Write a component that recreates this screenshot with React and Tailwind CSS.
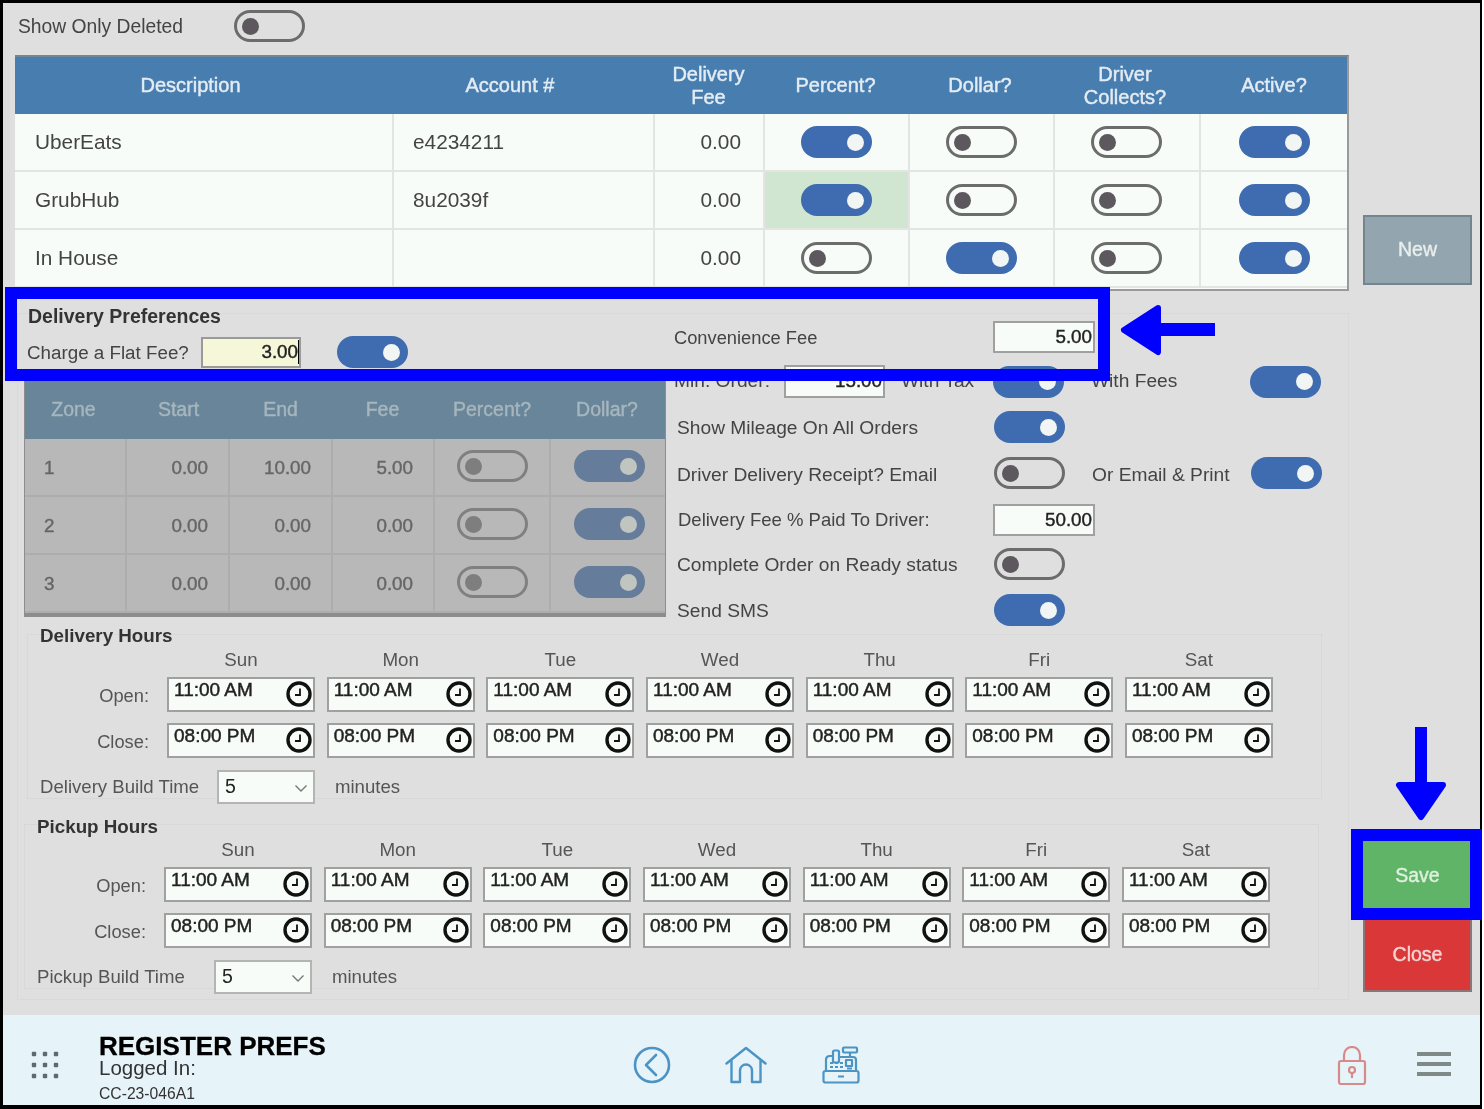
import React from "react";

const Toggle = ({ on, dim, className = "" }) => {
  if (on) {
    return (
      <div className={`w-[71px] h-[32px] shrink-0 rounded-full flex items-center justify-end pr-[8px] ${dim ? "bg-[#667c9b]" : "bg-[#3f6cb0]"} ${className}`}>
        <div className={`w-[17px] h-[17px] rounded-full ${dim ? "bg-[#c0c5c0]" : "bg-[#f1f5f3]"}`} />
      </div>
    );
  }
  return (
    <div className={`w-[71px] h-[32px] shrink-0 rounded-full border-[3px] flex items-center pl-[5px] ${dim ? "border-[#808080]" : "border-[#6c6c6c]"} ${className}`}>
      <div className={`w-[17px] h-[17px] rounded-full ${dim ? "bg-[#7e7e7e]" : "bg-[#5d585e]"}`} />
    </div>
  );
};

const Clock = () => (
  <svg width="26" height="26" viewBox="0 0 26 26" fill="none" className="ml-auto mt-[2px] shrink-0">
    <circle cx="13" cy="13" r="11" stroke="#111" strokeWidth="3.4" />
    <path d="M14 7.500V14H9" stroke="#111" strokeWidth="1.8" />
  </svg>
);

const TimeBox = ({ t }) => (
  <div className="w-[148px] h-[35px] shrink-0 border-2 border-[#a0a0a0] bg-[#f8fcf8] flex items-start pl-[5px] pr-px text-[19px] leading-[22px] text-[#222] [-webkit-text-stroke:0.45px_#222]">
    <span>{t}</span>
    <Clock />
  </div>
);

const DAYS = ["Sun", "Mon", "Tue", "Wed", "Thu", "Fri", "Sat"];

const HoursBox = ({ title, build, className, titleTop }) => (
  <div className={`w-[1295px] h-[165px] border border-[#d8d8d8] ${className}`}>
    <div className={`h-6 ${titleTop} pl-[12px] leading-6 font-bold text-[18.8px] text-[#333]`}>{title}</div>
    <div className="h-6 flex">
      <div className="w-[139px] shrink-0" />
      <div className="flex gap-[11.67px]">
        {DAYS.map((d) => (
          <div key={d} className="w-[148px] text-center leading-6 text-[18.8px] text-[#555]">{d}</div>
        ))}
      </div>
    </div>
    <div className="flex mt-[5px] items-center">
      <div className="w-[121px] mr-[18px] text-right text-[18.3px] text-[#555] shrink-0 pt-[3px]">Open:</div>
      <div className="flex gap-[11.67px]">
        {DAYS.map((d) => <TimeBox key={d} t="11:00 AM" />)}
      </div>
    </div>
    <div className="flex mt-[11px] items-center">
      <div className="w-[121px] mr-[18px] text-right text-[18.3px] text-[#555] shrink-0 pt-[3px]">Close:</div>
      <div className="flex gap-[11.67px]">
        {DAYS.map((d) => <TimeBox key={d} t="08:00 PM" />)}
      </div>
    </div>
    <div className="flex items-center mt-[12px] pl-[12px]">
      <div className="w-[177px] shrink-0 text-[18.6px] text-[#555]">{build}</div>
      <div className="w-[98px] h-[34px] border-2 border-[#b4b4b4] bg-[#f8fcf8] flex items-center pl-[6px] pr-[5px] text-[19.5px] text-[#222] shrink-0">
        <span>5</span>
        <svg width="14" height="14" viewBox="0 0 14 14" fill="none" className="ml-auto mt-[2px]">
          <path d="M1.500 4.500 7 10l5.500-5.500" stroke="#777" strokeWidth="1.4" />
        </svg>
      </div>
      <div className="ml-[20px] text-[18.6px] text-[#555]">minutes</div>
    </div>
  </div>
);

const TOP_ROWS = [
  { d: "UberEats", a: "e4234211", p: true, dl: false, c: false, ac: true },
  { d: "GrubHub", a: "8u2039f", p: true, dl: false, c: false, ac: true, hi: true },
  { d: "In House", a: "", p: false, dl: true, c: false, ac: true },
];

const TOP_COLS = "grid-cols-[379px_261px_110px_145px_145px_146px_146px]";

const TopTable = () => (
  <div className="w-[1334px] h-[236px] border-t-2 border-t-[#6f8797] border-r-2 border-b-2 border-[#9a9a9a] bg-[#f8fcf8]">
    <div className={`grid ${TOP_COLS} h-[57px] bg-[#487db0] text-[#e3ecf3] text-[20px] leading-[23px] text-center [-webkit-text-stroke:0.45px_#e3ecf3]`}>
      <div className="flex items-center justify-center pr-[28px]">Description</div>
      <div className="flex items-center justify-center pr-[29px]">Account #</div>
      <div className="flex items-center justify-center pr-[3px]">Delivery<br />Fee</div>
      <div className="flex items-center justify-center pr-[4px]">Percent?</div>
      <div className="flex items-center justify-center pr-[5px]">Dollar?</div>
      <div className="flex items-center justify-center pr-[6px]">Driver<br />Collects?</div>
      <div className="flex items-center justify-center">Active?</div>
    </div>
    {TOP_ROWS.map((r) => (
      <div key={r.d} className={`grid ${TOP_COLS} h-[58px] border-b-2 border-[#e2e5e2] text-[20.8px] text-[#444]`}>
        <div className="flex items-center pl-[20px] border-r-2 border-[#e2e5e2]">{r.d}</div>
        <div className="flex items-center pl-[19px] border-r-2 border-[#e2e5e2]">{r.a}</div>
        <div className="flex items-center justify-end pr-[22px] border-r-2 border-[#e2e5e2]">0.00</div>
        <div className={`flex items-center justify-center border-r-2 border-[#e2e5e2] ${r.hi ? "bg-[#d1e6d1]" : ""}`}><Toggle on={r.p} /></div>
        <div className="flex items-center justify-center border-r-2 border-[#e2e5e2]"><Toggle on={r.dl} /></div>
        <div className="flex items-center justify-center pr-[2px] border-r-2 border-[#e2e5e2]"><Toggle on={r.c} /></div>
        <div className="flex items-center justify-center"><Toggle on={r.ac} /></div>
      </div>
    ))}
  </div>
);

const ZONE_COLS = "grid-cols-[102px_103px_103px_102px_116px_116px]";
const ZONES = [
  ["1", "0.00", "10.00", "5.00"],
  ["2", "0.00", "0.00", "0.00"],
  ["3", "0.00", "0.00", "0.00"],
];

const ZoneTable = () => (
  <div className="w-[642px] h-[236px] mt-[13px] border-b-4 border-[#8d8d8d] border-x border-x-[#8d8d8d] bg-[#b8b8b8]">
    <div className={`grid ${ZONE_COLS} h-[58px] bg-[#688599] text-[#a7b6be] text-[19.5px] text-center [-webkit-text-stroke:0.4px_#a7b6be]`}>
      <div className="flex items-center justify-center pr-[5px]">Zone</div>
      <div className="flex items-center justify-center">Start</div>
      <div className="flex items-center justify-center pr-[2px]">End</div>
      <div className="flex items-center justify-center pr-[3px]">Fee</div>
      <div className="flex items-center justify-center pr-[2px]">Percent?</div>
      <div className="flex items-center justify-center pr-[4px]">Dollar?</div>
    </div>
    {ZONES.map((z) => (
      <div key={z[0]} className={`grid ${ZONE_COLS} h-[58px] border-b-2 border-[#adadad] text-[18.8px] text-[#666] [-webkit-text-stroke:0.4px_#666]`}>
        <div className="flex items-center pl-[19px] pt-[2px] border-r-2 border-[#adadad]">{z[0]}</div>
        <div className="flex items-center justify-end pr-[20px] pt-[2px] border-r-2 border-[#adadad]">{z[1]}</div>
        <div className="flex items-center justify-end pr-[20px] pt-[2px] border-r-2 border-[#adadad]">{z[2]}</div>
        <div className="flex items-center justify-end pr-[20px] pt-[2px] border-r-2 border-[#adadad]">{z[3]}</div>
        <div className="flex items-center justify-center pb-[2px] border-r-2 border-[#adadad]"><Toggle dim /></div>
        <div className="flex items-center justify-center pb-[2px]"><Toggle dim on /></div>
      </div>
    ))}
  </div>
);

const NumBox = ({ v, className = "" }) => (
  <div className={`h-[32px] border-2 border-[#a0a0a0] bg-[#f8fcf8] flex items-center justify-end pr-px text-[18.8px] text-[#222] [-webkit-text-stroke:0.4px_#222] ${className}`}>
    {v}
  </div>
);

const PrefRow = ({ label, mt, children, labelClass = "pl-[3px] pt-[3px] text-[19.2px]", w = "w-[319px]" }) => (
  <div className={`flex items-center h-[32px] ${mt}`}>
    <div className={`${w} shrink-0 ${labelClass} text-[#444]`}>{label}</div>
    {children}
  </div>
);

const Prefs = () => (
  <div className="ml-[2px] w-[1332px] h-[687px] mt-[22px] border border-[#d9d9d9]">
    <div className="flex pl-[6px]">
      <div className="w-[642px] shrink-0">
        <div className="h-6 -mt-[10px] pl-[4px] leading-6 font-bold text-[19.5px] text-[#333]">Delivery Preferences</div>
        <div className="flex items-center h-[32px] mt-[8px]">
          <div className="w-[177px] pl-[3px] pt-[2px] text-[18.8px] text-[#444] shrink-0">Charge a Flat Fee?</div>
          <div className="w-[100px] h-[31px] border-2 border-[#9a9a9a] bg-[#f6f7d9] flex items-center justify-end text-[18.8px] text-[#222] [-webkit-text-stroke:0.4px_#222] shrink-0">
            3.00<span className="w-px h-[24px] bg-black" />
          </div>
          <Toggle on className="ml-[36px]" />
        </div>
        <ZoneTable />
      </div>
      <div className="ml-[8px] w-[660px]">
        <div className="flex items-center h-[32px] mt-[7px]">
          <div className="w-[319px] shrink-0 pt-[2px] text-[18.3px] text-[#444]">Convenience Fee</div>
          <NumBox v="5.00" className="w-[102px]" />
        </div>
        <div className="flex items-center h-[33px] mt-[12px] text-[19.2px] text-[#444]">
          <div className="w-[110px] shrink-0">Min. Order:</div>
          <NumBox v="15.00" className="w-[101px] h-[33px]" />
          <div className="w-[92px] ml-[16px] shrink-0">With Tax</div>
          <Toggle on />
          <div className="w-[159px] ml-[27px] shrink-0">With Fees</div>
          <Toggle on />
        </div>
        <PrefRow label="Show Mileage On All Orders" mt="mt-[13px]" w="w-[320px]" labelClass="pl-[3px] pt-[3px] text-[19.2px]"><Toggle on /></PrefRow>
        <PrefRow label="Driver Delivery Receipt? Email" mt="mt-[14px]" w="w-[320px]" labelClass="pl-[3px] pt-[5px] text-[19.2px]">
          <Toggle />
          <div className="w-[159px] ml-[27px] pt-[5px] shrink-0 text-[19.2px] text-[#444]">Or Email &amp; Print</div>
          <Toggle on />
        </PrefRow>
        <PrefRow label="Delivery Fee % Paid To Driver:" mt="mt-[15px]" labelClass="pl-[4px] text-[18.5px]">
          <NumBox v="50.00" className="w-[102px]" />
        </PrefRow>
        <PrefRow label="Complete Order on Ready status" mt="mt-[12px]" w="w-[320px]"><Toggle /></PrefRow>
        <PrefRow label="Send SMS" mt="mt-[14px]" w="w-[320px]"><Toggle on /></PrefRow>
      </div>
    </div>
    <HoursBox title="Delivery Hours" build="Delivery Build Time" className="ml-[9px] mt-[8px]" titleTop="-mt-[11px]" />
    <HoursBox title="Pickup Hours" build="Pickup Build Time" className="ml-[6px] mt-[25px]" titleTop="-mt-[10px] -mb-[1px]" />
  </div>
);

const Footer = () => (
  <div className="h-[90px] shrink-0 bg-[#e6f3f9] flex items-start">
    <svg width="28" height="28" viewBox="0 0 28 28" className="ml-[28px] mt-[36px] shrink-0" fill="#5d6a70">
      {[3, 14, 25].map((x) => [3, 14, 25].map((y) => <rect key={`${x}-${y}`} x={x - 2.2} y={y - 2.2} width="4.400" height="4.400" rx="1" />))}
    </svg>
    <div className="ml-[40px] w-[300px] shrink-0 text-black">
      <div className="h-[26px] mt-[18px] leading-[26px] font-bold text-[26px] [-webkit-text-stroke:0.3px_#000]">REGISTER PREFS</div>
      <div className="h-[22px] -mt-[2px] leading-[22px] text-[20.5px] text-[#333]">Logged In:</div>
      <div className="h-[20px] mt-[5px] leading-[20px] text-[15.7px] text-[#333]">CC-23-046A1</div>
    </div>
    <svg width="38" height="38" viewBox="0 0 38 38" fill="none" className="ml-[234px] mt-[31px] shrink-0" stroke="#4b94c4" strokeWidth="2.600">
      <circle cx="19" cy="19" r="17" />
      <path d="M23 9 13 19l10 10" strokeLinecap="round" strokeLinejoin="round" />
    </svg>
    <svg width="42" height="38" viewBox="0 0 42 38" fill="none" className="ml-[54px] mt-[31px] shrink-0" stroke="#4b94c4" strokeWidth="2.400" strokeLinejoin="round" strokeLinecap="round">
      <path d="M1.500 17.500 21 2l19.500 15.500" />
      <path d="M6.500 15v21H15V24.500a6 6 0 0 1 12 0V36h8.500V15" />
    </svg>
    <svg width="38" height="38" viewBox="0 0 38 38" fill="none" className="ml-[55px] mt-[31px] shrink-0" stroke="#4b94c4" strokeWidth="2.200" strokeLinejoin="round">
      <rect x="21" y="1.500" width="14" height="5" rx="1" />
      <path d="M28 6.500V11" />
      <rect x="11" y="4.500" width="6" height="12" rx="1.500" />
      <path d="M11 10H8Q4 10 4 14V25M17 11H31Q34 11 34 14V25" />
      <rect x="1.500" y="25" width="35" height="11.500" rx="2" />
      <rect x="24" y="14" width="6" height="6" />
      <path d="M8 17h3M13 17h3M18 17h3M8 21h3M13 21h3M18 21h3M25 22.500h5M16 30.500h6" />
    </svg>
    <svg width="30" height="40" viewBox="0 0 30 40" fill="none" className="ml-[477px] mt-[31px] shrink-0" stroke="#d88a8a" strokeWidth="2.200">
      <rect x="2" y="15" width="26" height="23" rx="2" />
      <path d="M7 15V9a8 8 0 0 1 16 0v6" />
      <circle cx="15" cy="24" r="3" />
      <path d="M15 27v5" />
    </svg>
    <div className="ml-[50px] mt-[37px] w-[34px] flex flex-col gap-[6px] shrink-0">
      <div className="h-[4px] bg-[#7f8a88]" />
      <div className="h-[4px] bg-[#7f8a88]" />
      <div className="h-[4px] bg-[#7f8a88]" />
    </div>
  </div>
);

const Overlays = () => (
  <>
    <div className="absolute left-[2px] top-[284px] w-[1105px] h-[94px] border-[12px] border-[#0000ff]" />
    <div className="absolute left-[1348px] top-[826px] w-[131px] h-[91px] border-[12px] border-[#0000ff]" />
    <svg width="100" height="56" viewBox="0 0 100 56" className="absolute left-[1115px] top-[298px]" fill="#0000ff" stroke="#0000ff" strokeLinejoin="round">
      <path d="M40 7 6 29l0 0 34 22Z" strokeWidth="6" />
      <rect x="38" y="22" width="59" height="13" stroke="none" />
    </svg>
    <svg width="56" height="96" viewBox="0 0 56 96" className="absolute left-[1390px] top-[724px]" fill="#0000ff" stroke="#0000ff" strokeLinejoin="round">
      <rect x="22" y="0" width="12" height="60" stroke="none" />
      <path d="M6 58h44L28 90Z" strokeWidth="6" />
    </svg>
  </>
);

export default function App() {
  return (
    <div className="w-[1482px] h-[1109px] border-[3px] border-r-2 border-b-4 border-black bg-[#dfdfdf] font-['Liberation_Sans',sans-serif] blur-[0.5px]">
      <div className="relative w-full h-full flex flex-col">
        <div className="flex-1 flex min-h-0">
          <div className="w-[1360px] shrink-0 pl-[12px]">
            <div className="h-[46px] mb-[6px] flex items-center">
              <div className="w-[219px] pl-[3px] pt-[2px] text-[19.3px] text-[#444] shrink-0">Show Only Deleted</div>
              <Toggle />
            </div>
            <TopTable />
            <Prefs />
          </div>
          <div className="w-[109px] shrink-0 flex flex-col text-[19.5px] [-webkit-text-stroke:0.4px_currentColor]">
            <div className="mt-[212px] h-[70px] bg-[#93a5ae] border-2 border-[#75858e] text-[#e8eeee] flex items-center justify-center">New</div>
            <div className="mt-[555px] h-[72px] bg-[#60b468] text-[#def0de] flex items-center justify-center">Save</div>
            <div className="mt-[8px] h-[72px] bg-[#da3838] border-2 border-[#8d7575] border-t-0 text-[#f6d3d3] flex items-center justify-center">Close</div>
          </div>
        </div>
        <Footer />
        <Overlays />
      </div>
    </div>
  );
}
